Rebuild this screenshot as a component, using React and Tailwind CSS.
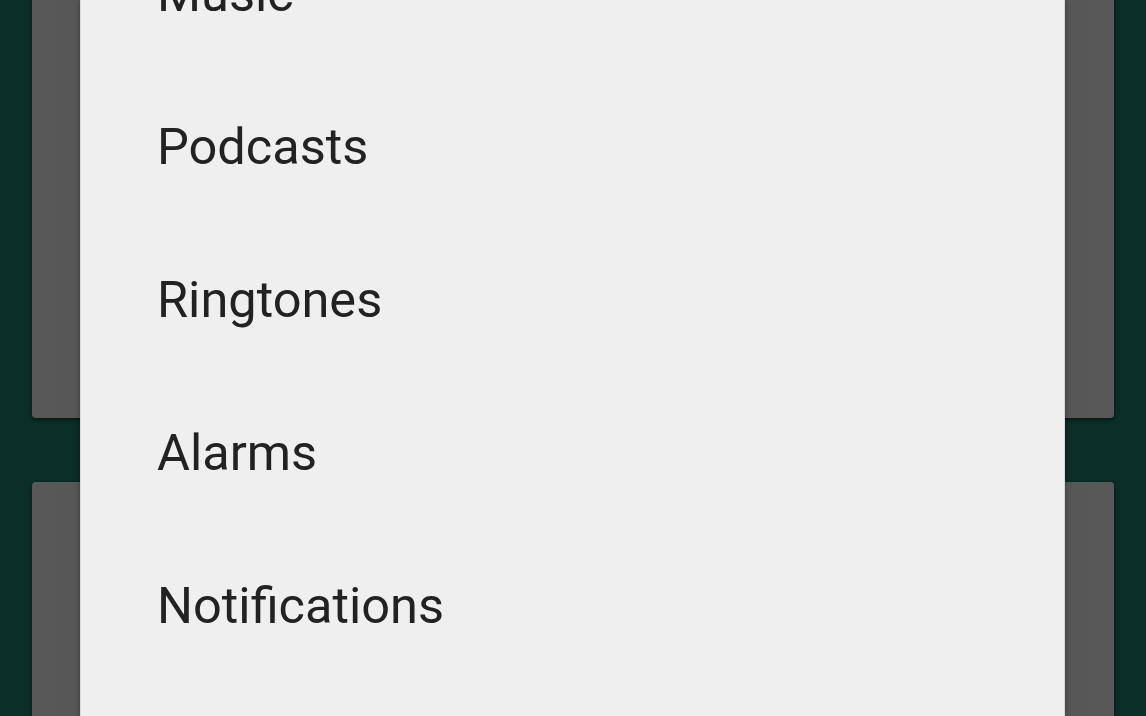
export default function App() {
  const items = ['Music', 'Podcasts', 'Ringtones', 'Alarms', 'Notifications'];

  return (
    <div className="relative w-[1146px] h-[716px] overflow-hidden bg-[#0b2e27]" style={{ fontFamily: 'Roboto, "Noto Sans", sans-serif' }}>
      {/* cards behind the dialog */}
      <div className="flex flex-col gap-[64px] px-[32px] -mt-[40px]">
        <div className="h-[458px] rounded-sm bg-gradient-to-r from-[#585858] via-[#4d4d4d] to-[#585858] shadow-[0_2px_4px_rgba(0,0,0,0.5)]" />
        <div className="h-[300px] rounded-sm bg-gradient-to-r from-[#585858] via-[#4d4d4d] to-[#585858] shadow-[0_2px_4px_rgba(0,0,0,0.5)]" />
      </div>

      {/* dialog */}
      <div className="absolute left-[80px] top-0 w-[985px] h-[716px] bg-[#efefef] border-x border-[#d9d9d9] shadow-[0_0_6px_rgba(0,0,0,0.35)]">
        <div className="flex flex-col -mt-[82px] pl-[76px]">
          {items.map(label => (
            <div key={label} className="h-[153px] flex items-center text-[50.5px] leading-none text-[#222222]">
              {label}
            </div>
          ))}
        </div>
      </div>
    </div>
  );
}
